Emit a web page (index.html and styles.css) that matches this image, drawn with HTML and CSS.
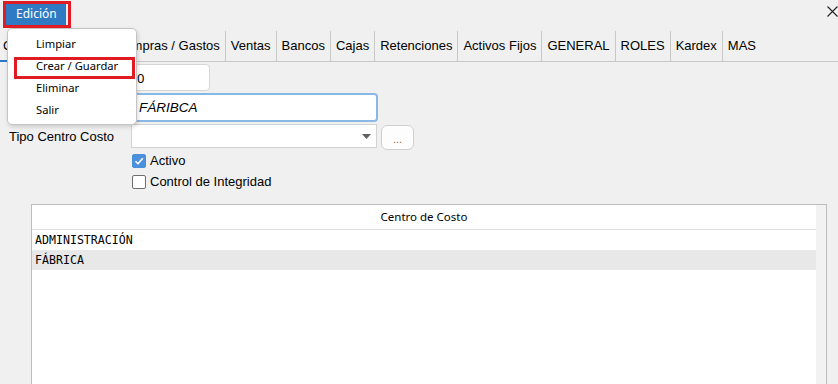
FILE: index.html
```html
<!DOCTYPE html>
<html lang="es">
  <head>
    <meta charset="UTF-8" />
    <title>Centro de Costo</title>
    <link rel="stylesheet" href="styles.css">
  </head>
  <body>
    <div id="window">
      <div id="menubar">
        <div class="menu-item active">Edición</div>
        <div class="close">
          <svg width="11" height="11" viewBox="0 0 11 11"><path d="M0.5 0.5 L10.5 10.5 M10.5 0.5 L0.5 10.5" stroke="#222" stroke-width="1.1" fill="none"/></svg>
        </div>
      </div>

      <div id="tabs">
        <div class="tab selected">Centros de Costo</div>
        <div class="tab">Compras / Gastos</div>
        <div class="tab">Ventas</div>
        <div class="tab">Bancos</div>
        <div class="tab">Cajas</div>
        <div class="tab">Retenciones</div>
        <div class="tab">Activos Fijos</div>
        <div class="tab">GENERAL</div>
        <div class="tab">ROLES</div>
        <div class="tab">Kardex</div>
        <div class="tab last">MAS</div>
      </div>

      <div id="form">
        <div class="row row-code">
          <div class="label">Código</div>
          <div class="input code">0</div>
        </div>
        <div class="row row-name">
          <div class="label">Nombre</div>
          <div class="input name focus">FÁRIBCA</div>
        </div>
        <div class="row row-type">
          <div class="label">Tipo Centro Costo</div>
          <div class="combo">
            <svg width="9" height="5" viewBox="0 0 9 5"><path d="M0 0 L9 0 L4.5 5 Z" fill="#606060"/></svg>
          </div>
          <div class="btn-more">...</div>
        </div>
        <div class="check-row">
          <span class="box checked">
            <svg width="12" height="12" viewBox="0 0 12 12"><path d="M2.5 6.2 L5 8.7 L9.8 3.2" stroke="#fff" stroke-width="1.6" fill="none"/></svg>
          </span>
          Activo
        </div>
        <div class="check-row">
          <span class="box"></span>
          Control de Integridad
        </div>
      </div>

      <div id="grid">
        <div class="grid-body">
          <div class="grid-header">Centro de Costo</div>
          <div class="grid-row">ADMINISTRACIÓN</div>
          <div class="grid-row alt">FÁBRICA</div>
        </div>
        <div class="grid-scroll"></div>
      </div>

      <div id="dropdown">
        <div class="drop-item">Limpiar</div>
        <div class="drop-item">Crear / Guardar</div>
        <div class="drop-item">Eliminar</div>
        <div class="drop-item">Salir</div>
      </div>

      <div class="mark mark-menu"></div>
      <div class="mark mark-save"></div>
    </div>
  </body>
</html>
```

FILE: styles.css
```css
body {
  margin: 0;
  padding: 0;
  background-color: #f0f0f0;
  font-family: "Liberation Sans", Arial, sans-serif;
  font-size: 13px;
  color: #000;
}
#window {
  position: relative;
  width: 838px;
  height: 384px;
  overflow: hidden;
}
#menubar {
  display: flex;
  align-items: center;
  height: 31px;
}
.menu-item {
  font-family: "Noto Sans", sans-serif;
  font-size: 12px;
  height: 21px;
  line-height: 20px;
  margin-left: 4px;
  margin-top: -2px;
}
.menu-item.active {
  background-color: #2f7ac3;
  color: #fff;
  padding: 0 9px 0 12px;
  border-right: 4px solid #e6eef7;
}
.close {
  margin-left: auto;
  width: 11px;
  height: 11px;
  margin-top: -11px;
}
#tabs {
  display: flex;
  height: 30px;
  border-bottom: 1px solid #c8c8c8;
}
.tab {
  padding: 0 5px;
  line-height: 30px;
  border-right: 1px solid #c8c8c8;
  white-space: nowrap;
}
.tab.selected {
  margin-left: -2px;
  width: 101px;
  overflow: hidden;
  border-bottom: 2px solid #2a7ac8;
  height: 29px;
}
.tab.last {
  border-right: none;
}
#form {
  padding-top: 2px;
}
.row {
  display: flex;
  align-items: center;
  margin-bottom: 2px;
}
.row-type {
  align-items: flex-start;
  margin-bottom: 0;
}
.label {
  width: 122px;
  padding-left: 9px;
}
.row-type .label {
  line-height: 26px;
}
.input {
  box-sizing: border-box;
  background-color: #fff;
  border: 1px solid #d6d6d6;
  border-radius: 4px;
  padding-left: 5px;
  font-family: "Noto Sans", sans-serif;
  font-size: 13px;
  display: flex;
  align-items: center;
}
.input.code {
  width: 79px;
  height: 27px;
}
.input.name {
  width: 247px;
  height: 29px;
  font-style: italic;
  font-family: "Liberation Sans", sans-serif;
  font-size: 13.5px;
  padding-left: 6px;
}
.input.focus {
  border: 2px solid #8ab8e6;
}
.combo {
  box-sizing: border-box;
  width: 246px;
  height: 24px;
  background-color: #fff;
  border: 1px solid #d2d2d2;
  display: flex;
  align-items: center;
  justify-content: flex-end;
  padding-right: 5px;
}
.btn-more {
  box-sizing: border-box;
  width: 33px;
  height: 25px;
  margin-left: 4px;
  margin-top: 1px;
  background-color: #fdfdfd;
  border: 1px solid #cfcfcf;
  border-radius: 6px;
  color: #9a6a20;
  font-size: 11px;
  text-align: center;
  line-height: 27px;
}
.check-row {
  display: flex;
  align-items: center;
  height: 21px;
  padding-left: 132px;
}
.box {
  box-sizing: border-box;
  width: 14px;
  height: 14px;
  border: 1px solid #6f6f6f;
  background-color: #fff;
  border-radius: 2px;
  margin-right: 4px;
  display: flex;
  align-items: center;
  justify-content: center;
}
.box.checked {
  background-color: #4a90da;
  border-color: #4a90da;
}
#grid {
  display: flex;
  margin: 12px 11px 0 31px;
  height: 190px;
  border: 1px solid #bdbdbd;
  border-bottom: none;
}
.grid-body {
  flex: 1;
  background-color: #fff;
}
.grid-header {
  font-family: "Noto Sans", sans-serif;
  font-size: 11.5px;
  text-align: center;
  height: 24px;
  line-height: 24px;
  border-bottom: 1px solid #e0e0e0;
}
.grid-row {
  font-family: "DejaVu Sans Mono", monospace;
  font-size: 11.6px;
  height: 20px;
  line-height: 20px;
  padding-left: 3px;
}
.grid-row.alt {
  background-color: #e8e8e8;
}
.grid-scroll {
  width: 10px;
  background-color: #f2f2f2;
}
#dropdown {
  position: absolute;
  left: 7px;
  top: 28px;
  width: 128px;
  padding: 4px 0 3px;
  background-color: #fff;
  border: 1px solid #c4c4c4;
  border-radius: 5px;
  box-shadow: 1px 2px 4px rgba(0, 0, 0, 0.15);
}
.drop-item {
  font-family: "Noto Sans", sans-serif;
  font-size: 11.2px;
  height: 22px;
  line-height: 22px;
  padding-left: 28px;
}
.mark {
  position: absolute;
  border: 3px solid #e11b22;
}
.mark-menu {
  left: 3px;
  top: 1px;
  width: 62px;
  height: 21px;
}
.mark-save {
  left: 14px;
  top: 57px;
  width: 115px;
  height: 16px;
}
```
